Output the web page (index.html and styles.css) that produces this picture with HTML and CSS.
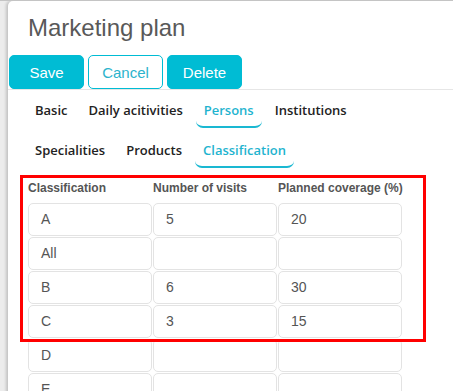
FILE: index.html
```html
<!DOCTYPE html>
<html lang="en">
<head>
  <meta charset="UTF-8">
  <title>Marketing plan</title>
  <link rel="stylesheet" href="styles.css">
</head>
<body>
  <div class="panel">
    <h1 class="title">Marketing plan</h1>
    <div class="actions">
      <button class="btn">Save</button>
      <button class="btn btn-outline">Cancel</button>
      <button class="btn">Delete</button>
    </div>
    <nav class="tabs">
      <div class="tab-row">
        <a class="tab">Basic</a>
        <a class="tab">Daily acitivities</a>
        <a class="tab active">Persons</a>
        <a class="tab">Institutions</a>
      </div>
      <div class="tab-row">
        <a class="tab">Specialities</a>
        <a class="tab">Products</a>
        <a class="tab active">Classification</a>
      </div>
    </nav>
    <div class="grid-wrap">
      <div class="grid">
        <div class="head">Classification</div>
        <div class="head">Number of visits</div>
        <div class="head">Planned coverage (%)</div>

        <div class="cell">A</div><div class="cell">5</div><div class="cell">20</div>
        <div class="cell">All</div><div class="cell"></div><div class="cell"></div>
        <div class="cell">B</div><div class="cell">6</div><div class="cell">30</div>
        <div class="cell">C</div><div class="cell">3</div><div class="cell">15</div>
        <div class="cell">D</div><div class="cell"></div><div class="cell"></div>
        <div class="cell">E</div><div class="cell"></div><div class="cell"></div>
      </div>
      <div class="highlight"></div>
    </div>
  </div>
</body>
</html>
```

FILE: styles.css
```css
* { box-sizing: border-box; margin: 0; padding: 0; }

html, body {
  height: 391px;
  overflow: hidden;
}

body {
  font-family: "Liberation Sans", Arial, sans-serif;
  background-color: #ececec;
  padding: 1px 0 0 8px;
  border-top: 1px solid #c4c4c4;
}

.panel {
  background-color: #fff;
  border-radius: 5px 0 0 0;
  box-shadow: -2px 0 3px rgba(0,0,0,0.18);
  min-height: 500px;
  margin-top: -1px;
}

.title {
  font-size: 24px;
  line-height: 28px;
  font-weight: normal;
  color: #595959;
  padding: 13px 0 0 20px;
}

.actions {
  display: flex;
  gap: 4px;
  margin-top: 13px;
  padding-left: 1px;
  border-bottom: 1px solid #e6e6e6;
}

.btn {
  width: 75px;
  height: 34px;
  font-family: "Liberation Sans", Arial, sans-serif;
  font-size: 15px;
  color: #fff;
  background-color: #00bcd4;
  border: 1px solid #00bcd4;
  border-radius: 5px;
}

.btn-outline {
  background-color: #fff;
  color: #2bb3cc;
}

.tabs {
  padding: 7px 0 0 19px;
}

.tab-row {
  display: flex;
  gap: 5px;
  margin-bottom: 9px;
}

.tab {
  font-family: "Open Sans", sans-serif;
  font-size: 13px;
  font-weight: 600;
  line-height: 18px;
  color: #222;
  padding: 4px 8px 7px;
  border-bottom: 2px solid transparent;
  border-radius: 0 0 7px 7px;
}

.tab.active {
  color: #1fb4cf;
  border-bottom-color: #1ab8d2;
}

.grid-wrap {
  position: relative;
  margin-top: 12px;
  padding-left: 20px;
}

.grid {
  display: grid;
  grid-template-columns: repeat(3, 124px);
  grid-template-rows: 22px;
  grid-auto-rows: 33px;
  gap: 1px;
}

.head {
  font-size: 12px;
  font-weight: bold;
  color: #555;
  line-height: 15px;
  padding-top: 1px;
  white-space: nowrap;
}

.cell {
  border: 1px solid #e3e3e3;
  border-radius: 5px;
  font-size: 14px;
  color: #555;
  line-height: 31px;
  padding-left: 12px;
}

.highlight {
  position: absolute;
  left: 12px;
  top: -5px;
  width: 406px;
  height: 167px;
  border: 3px solid #f00;
}
```
